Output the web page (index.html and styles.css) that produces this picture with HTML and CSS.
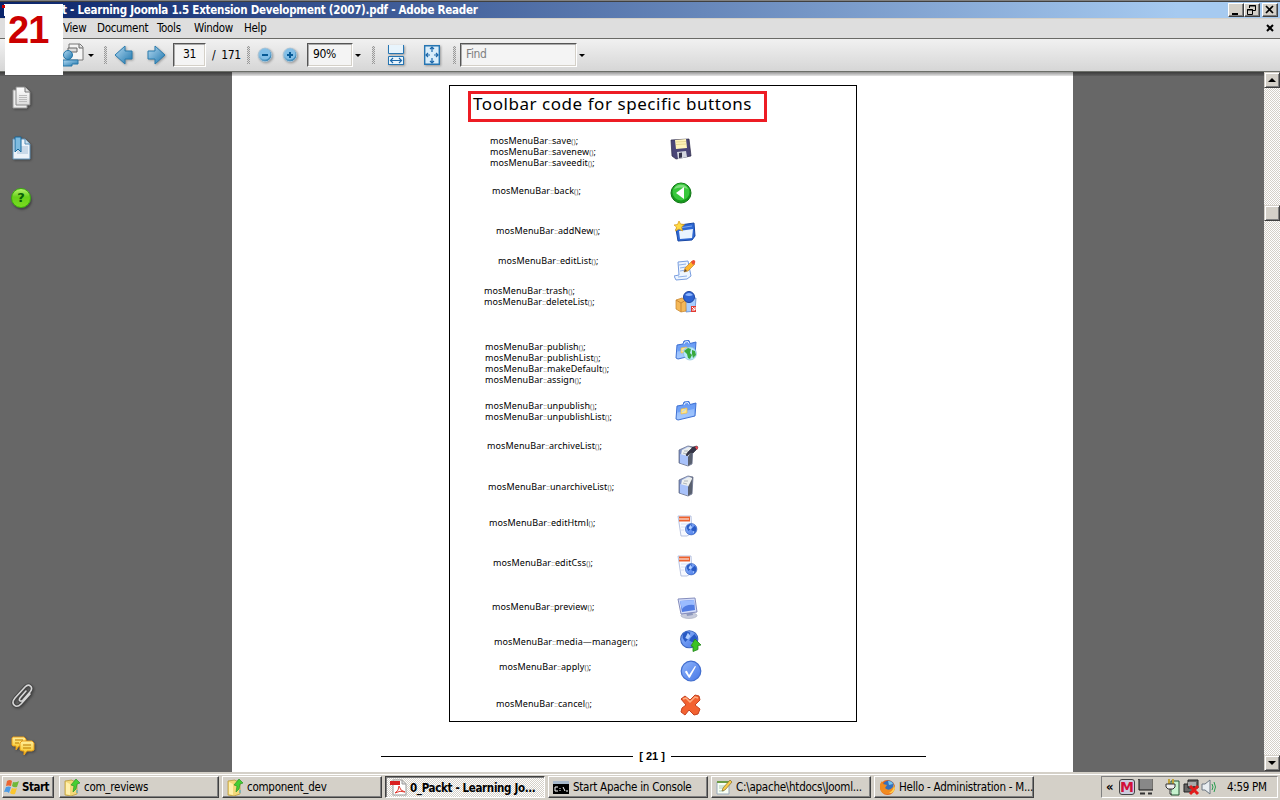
FILE: index.html
```html
<!DOCTYPE html>
<html lang="en">
<head>
<meta charset="utf-8">
<title>Learning Joomla 1.5 Extension Development (2007).pdf - Adobe Reader</title>
<link rel="stylesheet" href="styles.css">
</head>
<body>
<svg class="defs" width="0" height="0" aria-hidden="true">
  <defs>
    <linearGradient id="blue" x1="0" y1="0" x2="1" y2="1"><stop offset="0" stop-color="#b5daf2"/><stop offset="1" stop-color="#1c75ac"/></linearGradient>
    <linearGradient id="sky" x1="0" y1="0" x2="0" y2="1"><stop offset="0" stop-color="#5a8ff0"/><stop offset="1" stop-color="#a8cbff"/></linearGradient>
    <linearGradient id="orb" x1="0" y1="0" x2="1" y2="1"><stop offset="0" stop-color="#8fb5fb"/><stop offset="1" stop-color="#4878e6"/></linearGradient>
    <linearGradient id="steel" x1="0" y1="0" x2="1" y2="0"><stop offset="0" stop-color="#6f83b8"/><stop offset=".6" stop-color="#c8d8ff"/><stop offset="1" stop-color="#606474"/></linearGradient>
    <linearGradient id="gold" x1="0" y1="0" x2="0" y2="1"><stop offset="0" stop-color="#fff0a0"/><stop offset="1" stop-color="#f7be10"/></linearGradient>
    <linearGradient id="paper" x1="0" y1="0" x2="0" y2="1"><stop offset="0" stop-color="#fff"/><stop offset="1" stop-color="#dcdcdc"/></linearGradient>
    <radialGradient id="green" cx=".45" cy=".3" r=".8"><stop offset="0" stop-color="#a4f44e"/><stop offset="1" stop-color="#3fae08"/></radialGradient>
    <g id="globe">
      <circle cx="7" cy="7" r="6.5" fill="url(#orb)" stroke="#3c66c0" stroke-width=".8"/>
      <path d="M2 3 5 1l3 1-1 2-2 1 1 2-2 2-2-3zM8 6l3-3 2 3-1 4-2 2-1-3-2-1z" fill="#285ac4"/>
      <path d="M6 2l2 3-2 2-2-1zM9 9l2 1-2 2z" fill="#b3d0ff"/>
    </g>
    <g id="folder">
      <path d="M1 19 2 6l6-1 1-3 5-.5 1 3 6-1.500-1 13-17 4z" fill="url(#sky)" stroke="#3f72d4" stroke-width="1"/>
      <path d="M3 8l16-3-.5 4L3 12z" fill="#6da0f7"/>
      <path d="M2 13v6l17-4V9z" fill="#a8ccff" opacity=".55"/>
      <path d="M9 5l1-2 3-.5 1 2" fill="none" stroke="#e1eeff"/>
      <path d="M6 9l6-1v5l-6 1z" fill="#ffe68a" stroke="#e9b94b" stroke-width=".7"/><path d="M7 12l4-3" stroke="#b1cffa"/>
    </g>
    <g id="webpage">
      <path d="M2 1h13l1 17-5 3H5z" fill="#f7f9ff" stroke="#a6b4d8" stroke-width=".8"/>
      <path d="M3 1.500h11v5H3z" fill="#ed612c"/><path d="M4 3v2m2-2v2m2-2v2m2-2v2m2-2v2" stroke="#fff"/>
      <path d="M5 9h7M5 12h4M5 15h3" stroke="#d6def2"/>
      <use href="#globe" transform="translate(9 8) scale(.88)"/>
    </g>
    <g id="cabinet">
      <path d="M2 5 11 1l5 1-1 17-4 2-9-3z" fill="url(#steel)" stroke="#68718d" stroke-width=".8"/>
      <path d="M5 5 12 2l3 1v6l-4 3-7-2z" fill="#edf0ef"/><path d="M11 12l4-8v14l-4 3z" fill="#59606f"/>
      <path d="M3 9l8 2v9l-8-2z" fill="#a8c2fa"/><path d="M7 6h4M6 8l4 1" stroke="#b0b6ba"/>
    </g>
    <g id="folderup">
      <path d="M1 2l7-1 1 1h4v13l-6 2-6-1z" fill="#f3d979" stroke="#b99a3d" stroke-width=".8"/><path d="M2 3l4 2v11l-4-1z" fill="#fff0ad"/>
      <path d="M7 6l5-6 4 4-3 1-1 5-3 3 1-6z" fill="#45cf32" stroke="#2d9526" stroke-width=".7"/><path d="M13 11v3" stroke="#3cacde"/>
    </g>
  </defs>
</svg>
<div class="desktop">
  <div class="badge">21</div>
  <header class="titlebar">
    <svg class="pdfmark" width="16" height="14" viewBox="0 0 16 14"><path d="M2 1h10l3 3v9H2z" fill="#fff"/><path d="M0 2h12v3H0z" fill="#d00000"/></svg>
    <span class="title">t - Learning Joomla 1.5 Extension Development (2007).pdf - Adobe Reader</span>
    <span class="winbtns">
      <span class="wb"><svg width="14" height="12"><path d="M3 9h6v2H3z"/></svg></span>
      <span class="wb"><svg width="14" height="12"><path d="M4.500 4V1.500h6v5H8M4 2h7M2.500 5.500h5v5h-5zM2 6h6" fill="none" stroke="#000"/></svg></span>
      <span class="wb close"><svg width="14" height="12"><path d="M3 2l7 7m0-7L3 9" fill="none" stroke="#000" stroke-width="1.700"/></svg></span>
    </span>
  </header>
  <nav class="menubar">
    <span class="m-view">View</span><span class="m-doc">Document</span><span class="m-tools">Tools</span><span class="m-window">Window</span><span class="m-help">Help</span>
    <svg class="docclose" width="8" height="8"><path d="M1 1l6 6m0-6L1 7" stroke="#000" stroke-width="2"/></svg>
  </nav>
  <div class="toolbar">
    <svg class="t-collab" width="23" height="24" viewBox="0 0 23 24"><path d="M6 1h11l3 3v13H6z" fill="#f5f5f5" stroke="#777"/><path d="M16 1v4h4M5 5h9v4H5z" fill="#ddd" stroke="#666"/><circle cx="5" cy="12" r="4.500" fill="url(#blue)" stroke="#2676a8"/><path d="M0 17h15v4H9v2H0z" fill="url(#blue)" stroke="#2676a8"/></svg>
    <i class="caret c1"></i><i class="grip g1"></i>
    <svg class="t-left" width="20" height="22" viewBox="0 0 20 22"><path d="M1 11 11 2v5h7v8h-7v5z" fill="url(#blue)" stroke="#2b7cae"/></svg>
    <svg class="t-right" width="20" height="22" viewBox="0 0 20 22"><path d="M19 11 9 2v5H2v8h7v5z" fill="url(#blue)" stroke="#2b7cae"/></svg>
    <span class="field f-page">31</span><span class="pages">/&nbsp; 171</span><i class="grip g2"></i>
    <svg class="t-minus" width="16" height="16" viewBox="0 0 16 16"><circle cx="8" cy="8" r="6.800" fill="url(#blue)" stroke="#a9c3d5"/><circle cx="8" cy="7" r="5.500" fill="#83bfe7"/><path d="M5 8h6" stroke="#075a96" stroke-width="2"/></svg>
    <svg class="t-plus" width="16" height="16" viewBox="0 0 16 16"><circle cx="8" cy="8" r="6.800" fill="url(#blue)" stroke="#a9c3d5"/><circle cx="8" cy="7" r="5.500" fill="#83bfe7"/><path d="M5 8h6M8 5v6" stroke="#075a96" stroke-width="2"/></svg>
    <span class="field f-zoom">90%</span><i class="caret c2"></i><i class="grip g3"></i>
    <svg class="t-fitw" width="16" height="20" viewBox="0 0 16 20"><path d="M.5 0v8.500h15V0M.5 20v-8.500h15V20" fill="#e8f4fc" stroke="#2675b2"/><path d="M0 19.500h16" stroke="#2675b2"/><path d="M3 15.500h10M5 13l-2.500 2.500L5 18m6-5 2.500 2.500L11 18" fill="none" stroke="#1d68aa" stroke-width="1.200"/></svg>
    <svg class="t-fitp" width="16" height="20" viewBox="0 0 16 20"><path d="M.7.7h14.600v18.600H.7z" fill="#d9edfa" stroke="#2675b2" stroke-width="1.400"/><path d="M8 2v5M6 4l2-2 2 2M8 18v-5m-2 3 2 2 2-2M2 10h4M4 8l-2 2 2 2m10-2h-4m2-2 2 2-2 2" fill="none" stroke="#1d68aa" stroke-width="1.200"/></svg>
    <i class="grip g4"></i><span class="field f-find">Find</span><i class="caret c3"></i>
  </div>
  <main class="viewer">
    <aside class="side">
      <svg class="s-pages" width="22" height="24" viewBox="0 0 22 24"><path d="M2 4h14v18H2z" fill="#ececec" stroke="#999"/><path d="M5 1h9l5 5v13H5z" fill="url(#paper)" stroke="#888"/><path d="M14 1v5h5" fill="#ddd" stroke="#777"/><path d="M8 9.500h8m-8 2h8m-8 2h8m-8 2h8" stroke="#bbb"/></svg>
      <svg class="s-marks" width="22" height="24" viewBox="0 0 22 24"><path d="M2 3h12l5 5v15H2z" fill="#edf3f9" stroke="#6595bb"/><path d="M14 3v5h5" fill="#c8deed" stroke="#558db5"/><path d="M10 11h7m-7 2h7M6 15h11M6 17h11" stroke="#a5bfd7"/><path d="M4 1h6v15l-3-3-3 3z" fill="#7ebbe0" stroke="#17699c"/></svg>
      <span class="s-help">?</span>
      <svg class="s-clip" width="24" height="26" viewBox="0 0 24 26"><g fill="none" stroke-linecap="round"><path d="M15 8l-6 7c-2 3 1 4 3 2l7-8c4-5-1-9-5-5L4 15c-5 6 1 11 6 6l9-10" stroke="#444" stroke-width="3.300"/><path d="M15 8l-6 7c-2 3 1 4 3 2l7-8c4-5-1-9-5-5L4 15c-5 6 1 11 6 6l9-10" stroke="#d6d6d6" stroke-width="1.600"/></g></svg>
      <svg class="s-chat" width="24" height="20" viewBox="0 0 24 20"><path d="M2 1h11l2 2v6l-2 1H8l-3 4V10H2L1 9V2z" fill="url(#gold)" stroke="#e99d18"/><path d="M11 5h10l2 2v7l-2 1h-5l-3 4v-4h-2l-2-1V7z" fill="url(#gold)" stroke="#e99d18"/><path d="M4 4h8M4 7h4m4 2h8m-8 3h8" stroke="#b97900"/></svg>
    </aside>
    <section class="page">
      <div class="sheet">
        <h1>Toolbar code for specific buttons</h1>
        <div class="cols">
          <div class="codes">
            <p class="k1">mosMenuBar<i>::</i>save<b>()</b>;<br>mosMenuBar<i>::</i>savenew<b>()</b>;<br>mosMenuBar<i>::</i>saveedit<b>()</b>;</p>
            <p class="k2">mosMenuBar<i>::</i>back<b>()</b>;</p>
            <p class="k3">mosMenuBar<i>::</i>addNew<b>()</b>;</p>
            <p class="k4">mosMenuBar<i>::</i>editList<b>()</b>;</p>
            <p class="k5">mosMenuBar<i>::</i>trash<b>()</b>;<br>mosMenuBar<i>::</i>deleteList<b>()</b>;</p>
            <p class="k6">mosMenuBar<i>::</i>publish<b>()</b>;<br>mosMenuBar<i>::</i>publishList<b>()</b>;<br>mosMenuBar<i>::</i>makeDefault<b>()</b>;<br>mosMenuBar<i>::</i>assign<b>()</b>;</p>
            <p class="k7">mosMenuBar<i>::</i>unpublish<b>()</b>;<br>mosMenuBar<i>::</i>unpublishList<b>()</b>;</p>
            <p class="k8">mosMenuBar<i>::</i>archiveList<b>()</b>;</p>
            <p class="k9">mosMenuBar<i>::</i>unarchiveList<b>()</b>;</p>
            <p class="k10">mosMenuBar<i>::</i>editHtml<b>()</b>;</p>
            <p class="k11">mosMenuBar<i>::</i>editCss<b>()</b>;</p>
            <p class="k12">mosMenuBar<i>::</i>preview<b>()</b>;</p>
            <p class="k13">mosMenuBar<i>::</i>media—manager<b>()</b>;</p>
            <p class="k14">mosMenuBar<i>::</i>apply<b>()</b>;</p>
            <p class="k15">mosMenuBar<i>::</i>cancel<b>()</b>;</p>
          </div>
          <div class="icons">
            <svg class="i1" viewBox="0 0 22 22"><path d="M1 2l18-1 2 17-15 3-4-3z" fill="#4a4677" stroke="#292743" stroke-width=".7"/><path d="M5 2l11-1 1 9-11 1z" fill="#fff5bc"/><path d="M6 4l10-.5M6 6.500l10-.5" stroke="#dccb7f" stroke-width=".7"/><path d="M7 14l9-1 1 6-9 2z" fill="#d3d6df"/><path d="M9 15l3-.5v5L9 20z" fill="#34334b"/></svg>
            <svg class="i2" viewBox="0 0 22 22"><circle cx="11" cy="11" r="10" fill="#16991c" stroke="#117716"/><circle cx="11" cy="10" r="8.500" fill="#38c83b"/><path d="M4 7a8 8 0 0 1 14 0q-7-3-14 0" fill="#9ee79b" opacity=".7"/><path d="M6 11l8-6v12z" fill="#fff"/></svg>
            <svg class="i3" viewBox="0 0 22 22"><path d="M2 8l4-4 14-2 1 13-3 4-14 1z" fill="#2e68d4" stroke="#1948a4"/><path d="M5 10l14-2-1 9-12 1z" fill="#eaf4ff"/><path d="M5 7l13-2" stroke="#7faaf2"/><path d="M5 0l1.500 3 4 .5-3 2.500 1 4L5 8 1.500 10l1-4L0 4l3.500-.5z" fill="#ffda43" stroke="#d99715" stroke-width=".7"/></svg>
            <svg class="i4" viewBox="0 0 22 22"><path d="M4 3l10-1 3 15-4 3-11 1-2-4 5-1z" fill="#edf5ff" stroke="#789ddf"/><path d="M5 6l7-1M6 9l6-1m-6 4 6-1M4 18l9-1" stroke="#91b2e7"/><path d="M10 13l1-4 7-7 3 3-7 7z" fill="#ffb62e" stroke="#b57a25" stroke-width=".6"/><path d="M17 3l2-2q3 0 2 3l-2 2z" fill="#ec4e34"/><path d="M10 13l1-3 2 2z" fill="#5a4b3d"/></svg>
            <svg class="i5" viewBox="0 0 22 22"><path d="M10 7h11l-1 13-9 1z" fill="#a8ceff" stroke="#527dc5" stroke-width=".7"/><path d="M1 9l6-2 4 2v11l-5 1-5-3z" fill="#f4b858" stroke="#c48128" stroke-width=".7"/><path d="M1 9l5 3v9m0-9 5-3" fill="none" stroke="#ca8633"/><circle cx="14" cy="6" r="5.500" fill="#2e64d3" stroke="#2046a0"/><path d="M10 4q4-4 8 0-4 2-8 0" fill="#90b8ff"/><path d="M16 15h5v6h-5z" fill="#e23a32"/><path d="M17 16l3 3m0-3v3h-3" fill="none" stroke="#fff"/></svg>
            <svg class="i6" viewBox="0 0 22 22"><use href="#folder"/><circle cx="15" cy="14.500" r="6.500" fill="#b9e7fa" stroke="#81bccf" stroke-width=".6"/><path d="M9 12l4-3 3 1-1 4 2 2-2 4-2-1-1-4zM17 11l3 1 1 4-3 3-1-4z" fill="#38a93d"/></svg>
            <svg class="i7" viewBox="0 0 22 22"><use href="#folder"/></svg>
            <svg class="i8" viewBox="0 0 22 22"><use href="#cabinet"/><path d="M11 7l5-5 4-1 1 2-5 5-2-1-4 4-1-1z" fill="#353448" stroke="#20202c" stroke-width=".6"/><path d="M18 2l2 3 1-2-1-2z" fill="#ef4851"/></svg>
            <svg class="i9" viewBox="0 0 22 22"><use href="#cabinet" x="2"/></svg>
            <svg class="i10" viewBox="0 0 22 22"><use href="#webpage"/></svg>
            <svg class="i11" viewBox="0 0 22 22"><use href="#webpage"/></svg>
            <svg class="i12" viewBox="0 0 22 22"><ellipse cx="12" cy="18.500" rx="8" ry="3" fill="#c7cbdc" stroke="#a0a6b9" stroke-width=".6"/><path d="M9 15l6-1 1 4-6 1z" fill="#8e99bd"/><path d="M1 2l17-1 2 14-16 2z" fill="#d4ddfa" stroke="#858dbc"/><path d="M3 4l14-1 1 10-13 2z" fill="#527de3"/><path d="M3 4l14-1v5Q9 7 5 12z" fill="#9bbcff"/></svg>
            <svg class="i13" viewBox="0 0 22 22"><use href="#globe" transform="scale(1.320)"/><path d="M15 9l6 6-3 .5v4l-5 2v-5l-2-.5z" fill="#3bc325" stroke="#24871a" stroke-width=".8"/></svg>
            <svg class="i14" viewBox="0 0 22 22"><circle cx="11" cy="11" r="9.800" fill="url(#orb)" stroke="#416dce" stroke-width="1.200"/><path d="M5 12q1-2 2-1l2 4 6-9 1 .5-6 11-1 .5z" fill="#fff"/></svg>
            <svg class="i15" viewBox="0 0 22 22"><path d="M1 5l4-3 5 4 5-5 4 1 1 4-5 5 5 4-2 5-4 1-5-5-4 5-4-3 1-4 4-3z" fill="#f36231" stroke="#c44220"/><path d="M3 5l3-1 4 4 5-5 3 1" fill="none" stroke="#ffae82" stroke-width="1.500"/></svg>
          </div>
        </div>
      </div>
      <footer class="folio"><span></span><strong>[ 21 ]</strong><span></span></footer>
    </section>
    <div class="scrollbar"><span class="sb up"><i></i></span><span class="sb thumb"></span><span class="sb down"><i></i></span></div>
  </main>
  <footer class="taskbar">
    <div class="tb start"><svg width="16" height="16" viewBox="0 0 16 16"><path d="M3 2q3-2 5 0L7 7Q4 6 2 7z" fill="#eb6632"/><path d="M9 3q3 1 6-1l-2 6q-3 1-5-1z" fill="#70b83c"/><path d="M2 8q3-1 5 0l-2 6q-2-2-5-1z" fill="#4c9be5"/><path d="M8 9q3 1 5 0l-2 6q-3 1-5-1z" fill="#fac62f"/></svg><span>Start</span></div>
    <div class="tb"><svg width="17" height="17" viewBox="0 0 17 17"><use href="#folderup"/></svg><span>com_reviews</span></div>
    <div class="tb"><svg width="17" height="17" viewBox="0 0 17 17"><use href="#folderup"/></svg><span>component_dev</span></div>
    <div class="tb active"><svg width="17" height="17" viewBox="0 0 17 17"><path d="M3 1h9l4 4v11H3z" fill="#fff" stroke="#999"/><path d="M12 1v4h4" fill="#ddd" stroke="#999"/><path d="M0 2h10v4H0z" fill="#d91f20"/><path d="M5 14q4-2 4-7 1 5 6 6-5-2-10 1" fill="none" stroke="#e13c32"/></svg><span>0_Packt - Learning Jo...</span></div>
    <div class="tb"><svg width="17" height="17" viewBox="0 0 17 17"><path d="M0 2h16v13H0z" fill="#000"/><path d="M0 2h16v3H0z" fill="#a7b8ca"/><path d="M5 8H2v4h3M7 9v1m0 1v1m3-4 2 4m1 0h2" stroke="#fff" fill="none"/></svg><span class="apache">Start Apache in Console</span></div>
    <div class="tb"><svg width="17" height="17" viewBox="0 0 17 17"><path d="M1 3h12v12H1z" fill="#f9fff4" stroke="#9ab"/><path d="M1 3h12" stroke="#6c9c44" stroke-width="2"/><path d="M3 7h8M3 9h7m-7 3h5" stroke="#acb"/><path d="M6 12l1-3 7-8 2 2-7 8z" fill="#f9cb46" stroke="#806c32" stroke-width=".7"/></svg><span class="path">C:\apache\htdocs\Jooml...</span></div>
    <div class="tb"><svg width="17" height="17" viewBox="0 0 17 17"><circle cx="8.500" cy="8.500" r="7.500" fill="#e6671b"/><circle cx="9.500" cy="7" r="5.500" fill="#356fbd"/><path d="M9 2q4 0 5 3l-4 1z" fill="#77c6ec"/><path d="M1 5l2-3 1 3 4 1-2 3q4 4 8-1l1 2q-3 6-8 5-6-1-6-7z" fill="#f28b20"/><path d="M14 5q2 6-4 9 5 1 6-5z" fill="#ffd14d"/></svg><span class="hello">Hello - Administration - M...</span></div>
    <div class="tray">
      <span class="more">«</span>
      <span class="mcafee">M</span>
      <svg class="y2" width="15" height="16"><path d="M1 0h13v11H1z" fill="#888"/><path d="M0 0h1v11h14V0" fill="none" stroke="#111"/><path d="M2 14.500h5m3 0h4" stroke="#333" stroke-width="2"/></svg>
      <svg class="y3" width="16" height="17"><path d="M6 2h8v14H6z" fill="#c7f2ce" stroke="#253"/><path d="M4 0v5m4-5v5" stroke="#c2a438" stroke-width="2"/><path d="M1 5h9v3L8 10H3L1 8zM5 10v5h2" fill="#eee" stroke="#333"/></svg>
      <svg class="y4" width="17" height="17"><path d="M5 1h10v8H5zM1 5h10v8H1z" fill="#666" stroke="#222"/><path d="M5 3h8v4H5z" fill="#aaa"/><path d="M7 7l8 8m0-8-8 8" stroke="#e31b1b" stroke-width="3"/></svg>
      <svg class="y5" width="16" height="16"><path d="M1 5h3l5-4v14l-5-4H1z" fill="#e8edf1" stroke="#6d7782"/><path d="M11 5q2 3 0 6m2-8q3 5 0 10" fill="none" stroke="#299c50"/></svg>
      <span class="clock">4:59 PM</span>
    </div>
  </footer>
</div>
</body>
</html>
```
FILE: styles.css
```css
* { box-sizing: border-box; }
body { margin: 0; overflow: hidden; font: 11.5px/14px "DejaVu Sans Condensed", "DejaVu Sans", sans-serif; color: #000; }
svg { display: block; flex: none; }
.defs { position: absolute; }
.desktop { position: relative; width: 1280px; height: 800px; display: flex; flex-direction: column; background: #d4d0c8; }
.badge { position: absolute; z-index: 3; left: 5px; top: 4px; width: 58px; height: 71px; padding-left: 3px; background: #fff; color: #c00; font: bold 38px/52px "Liberation Sans", Arial, sans-serif; letter-spacing: -1px; }

.titlebar { height: 18px; border-top: 1px solid #808080; box-shadow: inset 0 1px #404040; background: linear-gradient(90deg, #0a246a, #a6caf0 92%); display: flex; align-items: center; color: #fff; }
.pdfmark { margin-left: 2px; }
.title { margin-left: 44px; font-weight: bold; font-size: 11.5px; letter-spacing: -.25px; white-space: nowrap; }
.winbtns { margin-left: auto; margin-right: 2px; padding-top: 1px; display: flex; }
.wb { width: 16px; height: 14px; background: #d4d0c8; border: 1px solid; border-color: #fff #404040 #404040 #fff; box-shadow: inset -1px -1px #808080; }
.wb.close { margin-left: 2px; }

.menubar { height: 21px; display: flex; align-items: center; background: #dedede; border-top: 1px solid #d4d0c8; border-bottom: 1px solid #6a6a66; padding: 0 6px 1px 63px; }
.m-view { width: 34px; } .m-doc { width: 60px; } .m-tools { width: 37px; } .m-window { width: 50px; }
.menubar span { letter-spacing: -.3px; }
.docclose { margin-left: auto; }

.toolbar { height: 33px; display: flex; align-items: center; background: linear-gradient(#f1f1f1, #d6d6d6); border-bottom: 1px solid #6c6f69; padding-left: 63px; }
.caret { width: 0; height: 0; border: 3px solid transparent; border-top-color: #000; border-bottom: 0; }
.grip { width: 3px; height: 18px; background: repeating-conic-gradient(#999 0 25%, #ddd 0 50%) 0 0 / 2px 2px; }
.c1 { margin-left: 2px; } .g1 { margin-left: 10px; }
.t-left { margin-left: 7px; } .t-right { margin-left: 12px; }
.field { height: 24px; background: #f4f4f4; border: 1px solid; border-color: #555 #fff #fff #555; box-shadow: inset 1px 1px #aaa, inset -1px -1px #d4d0c8; line-height: 21px; font-size: 12px; padding-left: 5px; letter-spacing: -.4px; }
.f-page { width: 33px; margin-left: 7px; padding-left: 9px; }
.pages { width: 30px; margin-left: 6px; font-size: 12px; letter-spacing: -.4px; white-space: nowrap; }
.g2 { margin-left: 5px; }
.t-minus { margin-left: 7px; } .t-plus { margin-left: 9px; }
.f-zoom { width: 46px; margin-left: 9px; }
.c2 { margin-left: 2px; } .g3 { margin-left: 11px; }
.t-fitw { margin-left: 13px; } .t-fitp { margin-left: 20px; }
.t-left, .t-right, .t-minus, .t-plus, .t-fitw, .t-fitp { filter: drop-shadow(1px 1px 1px #999); }
.g4 { margin-left: 13px; }
.f-find { width: 117px; margin-left: 4px; color: #808080; }
.c3 { margin-left: 2px; }

.viewer { height: 700px; display: flex; background: #676767; position: relative; }
.viewer::before { content: ""; position: absolute; left: 0; right: 16px; top: 0; height: 4px; background: linear-gradient(rgba(0,0,0,.42), rgba(0,0,0,.1)); z-index: 1; }
.side { width: 232px; padding: 14px 0 0 11px; display: flex; flex-direction: column; }
.side svg { filter: drop-shadow(1px 1px 1px #444); }
.s-marks { margin-top: 26px; }
.s-help { width: 20px; height: 20px; margin-top: 28px; border: 1px solid #39ad0b; border-radius: 50%; background: linear-gradient(#b6f36d, #67cf19 45%, #79dc20); color: #086008; text-align: center; font: bold 13px/18px "DejaVu Sans", sans-serif; box-shadow: 1px 2px 2px #444; }
.s-clip { margin-top: 475px; } .s-chat { margin-top: 27px; }
.page { width: 841px; height: 700px; background: #fff; }
.sheet { width: 408px; height: 637px; margin: 13px 0 0 217px; border: 1px solid #000; }
.sheet h1 { margin: 5px 0 0 18px; width: 299px; height: 31px; border: 3px solid #ed1c24; padding-left: 2px; font: 400 17px/19px "Noto Sans", sans-serif; letter-spacing: .55px; white-space: nowrap; }
.cols { display: flex; padding-left: 34px; }
.codes { width: 186px; padding-top: 13px; font: 9px/11px "Noto Sans", sans-serif; letter-spacing: .1px; white-space: nowrap; }
.codes p { margin: 0; }
.codes i { font-style: normal; font-size: 7px; line-height: 1px; color: #999; letter-spacing: 0; }
.codes b { font-weight: 400; font-size: 7px; line-height: 1px; color: #555; }
.codes .k1 { margin-left: 6px; }
.codes .k2 { margin: 17px 0 0 8px; }
.codes .k3 { margin: 29px 0 0 12px; }
.codes .k4 { margin: 19px 0 0 14px; }
.codes .k5 { margin: 19px 0 0 0; }
.codes .k6 { margin: 34px 0 0 1px; }
.codes .k7 { margin: 15px 0 0 1px; }
.codes .k8 { margin: 18px 0 0 3px; }
.codes .k9 { margin: 30px 0 0 4px; }
.codes .k10 { margin: 25px 0 0 5px; }
.codes .k11 { margin: 29px 0 0 9px; }
.codes .k12 { margin: 33px 0 0 8px; }
.codes .k13 { margin: 24px 0 0 10px; }
.codes .k14 { margin: 14px 0 0 15px; }
.codes .k15 { margin: 26px 0 0 12px; }
.icons { padding-top: 16px; }
.icons svg { width: 22px; height: 22px; }
.icons .i2 { margin-top: 22px; }
.icons .i3 { margin: 17px 0 0 4px; }
.icons .i4 { margin: 16px 0 0 4px; }
.icons .i5 { margin: 10px 0 0 5px; }
.icons .i6 { margin: 26px 0 0 5px; }
.icons .i7 { margin: 39px 0 0 5px; }
.icons .i8 { margin: 23px 0 0 7px; }
.icons .i9 { margin: 8px 0 0 5px; }
.icons .i10 { margin: 18px 0 0 6px; }
.icons .i11 { margin: 18px 0 0 6px; }
.icons .i12 { margin: 20px 0 0 7px; }
.icons .i13 { margin: 11px 0 0 10px; }
.icons .i14 { margin: 8px 0 0 10px; }
.icons .i15 { margin: 12px 0 0 10px; }
.folio { display: flex; align-items: center; margin: 27px 0 0 149px; width: 545px; font: bold 11px/14px "Liberation Sans", Arial, sans-serif; }
.folio span { height: 1px; background: #000; width: 252px; margin-top: 1px; }
.folio strong { width: 38px; text-align: center; white-space: nowrap; }
.folio span:last-child { width: 255px; }

.scrollbar { margin-left: auto; width: 16px; height: 699px; display: flex; flex-direction: column; background: repeating-conic-gradient(#fff 0 25%, #d4d0c8 0 50%) 0 0 / 2px 2px; }
.sb { height: 16px; background: #d4d0c8; border: 1px solid; border-color: #d4d0c8 #404040 #404040 #d4d0c8; box-shadow: inset 1px 1px #fff, inset -1px -1px #808080; display: flex; align-items: center; justify-content: center; flex: none; }
.sb i { border: 4px solid transparent; border-top: 0; border-bottom-color: #000; }
.sb.down i { border-top: 4px solid #000; border-bottom: 0; }
.thumb { margin-top: 117px; }
.down { margin-top: auto; }

.taskbar { height: 28px; display: flex; align-items: flex-start; gap: 3px; background: #d4d0c8; box-shadow: inset 0 2px #d4d0c8, inset 0 3px #fff; padding: 4px 2px 0; }
.tb { width: 160px; height: 22px; display: flex; align-items: center; padding-left: 4px; border: 1px solid; border-color: #fff #404040 #404040 #fff; box-shadow: inset -1px -1px #808080; white-space: nowrap; letter-spacing: -.25px; }
.tb span { margin-left: 3px; }
.tb.start { width: 52px; padding-left: 1px; margin-right: 2px; font-weight: bold; }
.tb.start span { margin-left: 2px; letter-spacing: -.5px; }
.tb.active { border-color: #404040 #fff #fff #404040; box-shadow: inset 1px 1px #808080; background: repeating-conic-gradient(#fff 0 25%, #d4d0c8 0 50%) 0 0 / 2px 2px; font-weight: bold; letter-spacing: -.35px; padding-top: 1px; }
.tray { margin-left: auto; width: 177px; height: 22px; border: 1px solid; border-color: #808080 #fff #fff #808080; display: flex; align-items: center; }
.more { width: 13px; margin-left: 4px; font-weight: bold; font-size: 13px; }
.mcafee { width: 16px; height: 16px; border: 1px solid #444; border-radius: 3px; background: #ccd; color: #d2103a; font: 900 14px/14px "DejaVu Sans", sans-serif; display: flex; justify-content: center; }
.y2 { margin-left: 3px; } .y3 { margin-left: 12px; } .y4 { margin-left: 2px; } .y5 { margin-left: 1px; }
.clock { margin-left: 10px; letter-spacing: -.3px; white-space: nowrap; }
```
